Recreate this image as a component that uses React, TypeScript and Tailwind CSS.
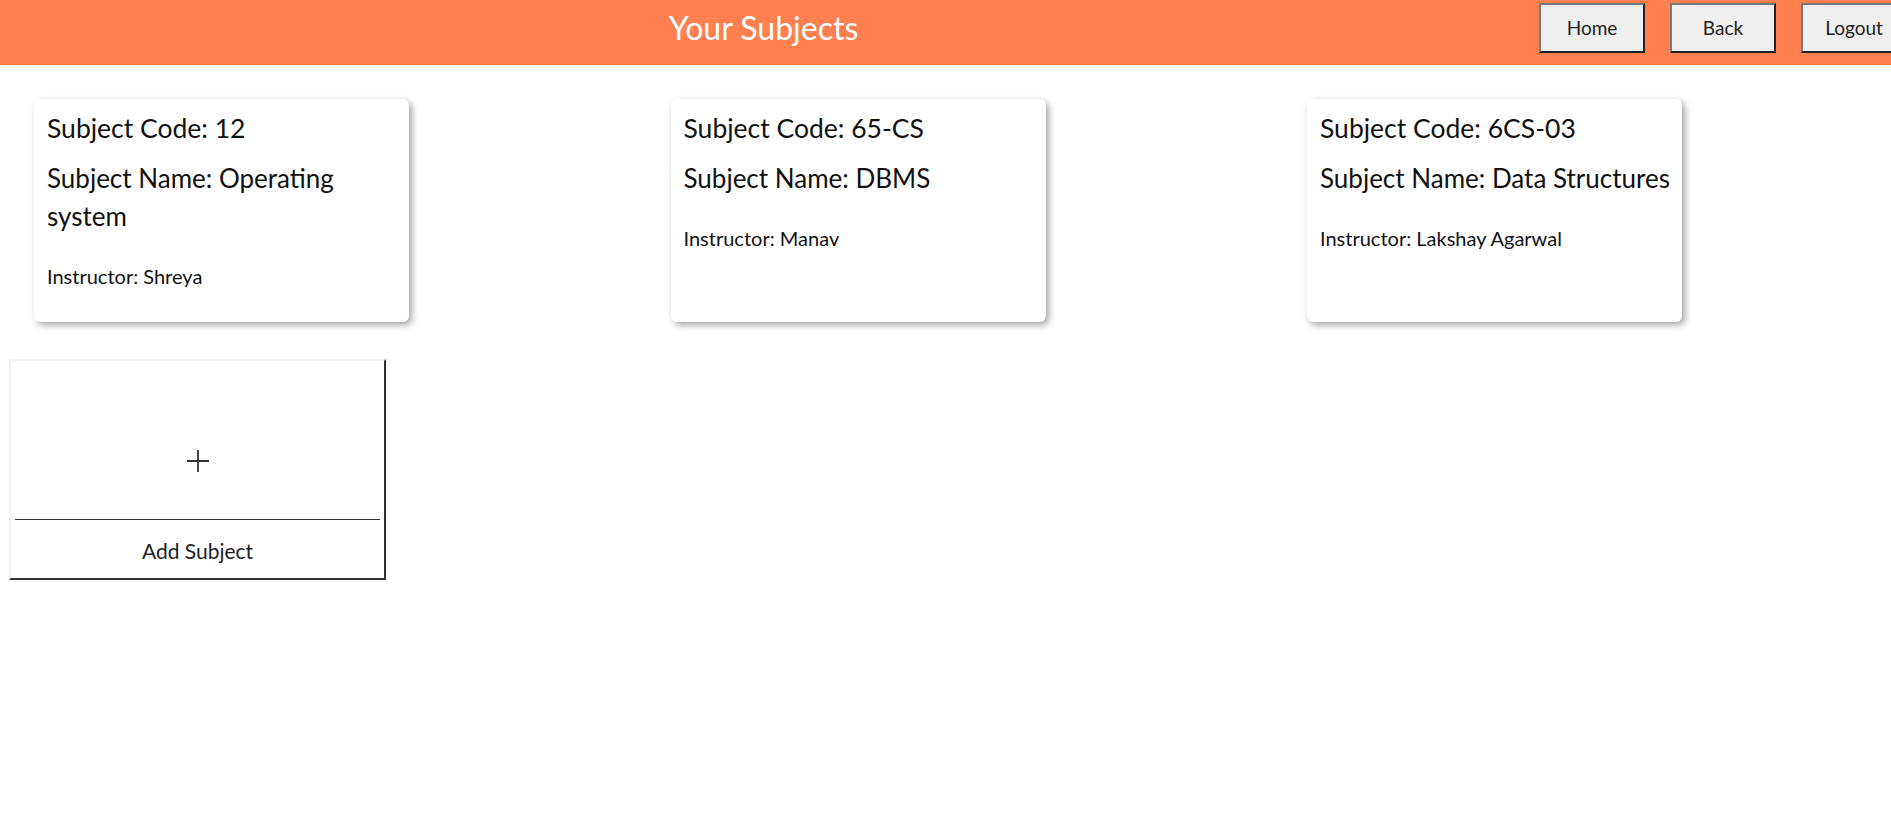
import React from 'react';

interface Subject {
  code: string;
  name: string;
  instructor: string;
}

const subjects: Subject[] = [
  { code: '12', name: 'Operating system', instructor: 'Shreya' },
  { code: '65-CS', name: 'DBMS', instructor: 'Manav' },
  { code: '6CS-03', name: 'Data Structures', instructor: 'Lakshay Agarwal' },
];

const font = { fontFamily: 'Lato, "Noto Sans", sans-serif' };

function NavButton({ label }: { label: string }) {
  return (
    <button className="mt-[3px] h-[50px] w-[106px] shrink-0 border-2 border-t-[#777] border-l-[#777] border-r-[#222] border-b-[#222] bg-[#efefef] text-[19px] text-[#222]">
      {label}
    </button>
  );
}

function SubjectCard({ subject }: { subject: Subject }) {
  return (
    <div className="h-[223px] w-[375px] shrink-0 rounded-[6px] bg-white pl-[13px] pr-[4px] pt-[10px] text-[#111] shadow-[3px_3px_7px_rgba(0,0,0,0.35)]">
      <p className="text-[26.5px] leading-[38px]">Subject Code: {subject.code}</p>
      <p className="mt-[12px] text-[26px] leading-[38px]">Subject Name: {subject.name}</p>
      <p className="mt-[27px] text-[20px] leading-[28px]">Instructor: {subject.instructor}</p>
    </div>
  );
}

export default function App() {
  return (
    <div className="min-h-screen w-full overflow-hidden bg-white" style={font}>
      <header className="flex h-[65px] items-start bg-[#ff7f50]">
        <h1 className="w-[1527px] shrink-0 text-center text-[32px] leading-[56px] text-white">Your Subjects</h1>
        <div className="ml-[12px] flex gap-[25px]">
          <NavButton label="Home" />
          <NavButton label="Back" />
          <NavButton label="Logout" />
        </div>
      </header>

      <div className="flex gap-[261.5px] pl-[34px] pt-[34px]">
        {subjects.map((s) => (
          <SubjectCard key={s.code} subject={s} />
        ))}
      </div>

      <button className="ml-[9px] mt-[37px] flex h-[221px] w-[377px] flex-col border-2 border-t-[#f2f2f2] border-l-[#f2f2f2] border-r-[#333] border-b-[#333] bg-white">
        <div className="flex h-[158px] w-full justify-center pt-[88px]">
          <svg width="24" height="24" viewBox="0 0 24 24">
            <path d="M12 1v22M1 12h22" stroke="#333" strokeWidth="1.8" fill="none" />
          </svg>
        </div>
        <div className="mx-[4px] h-px self-stretch bg-[#333]" />
        <div className="w-full pt-[17px] text-center text-[21px] leading-[28px] text-[#222]">Add Subject</div>
      </button>
    </div>
  );
}
